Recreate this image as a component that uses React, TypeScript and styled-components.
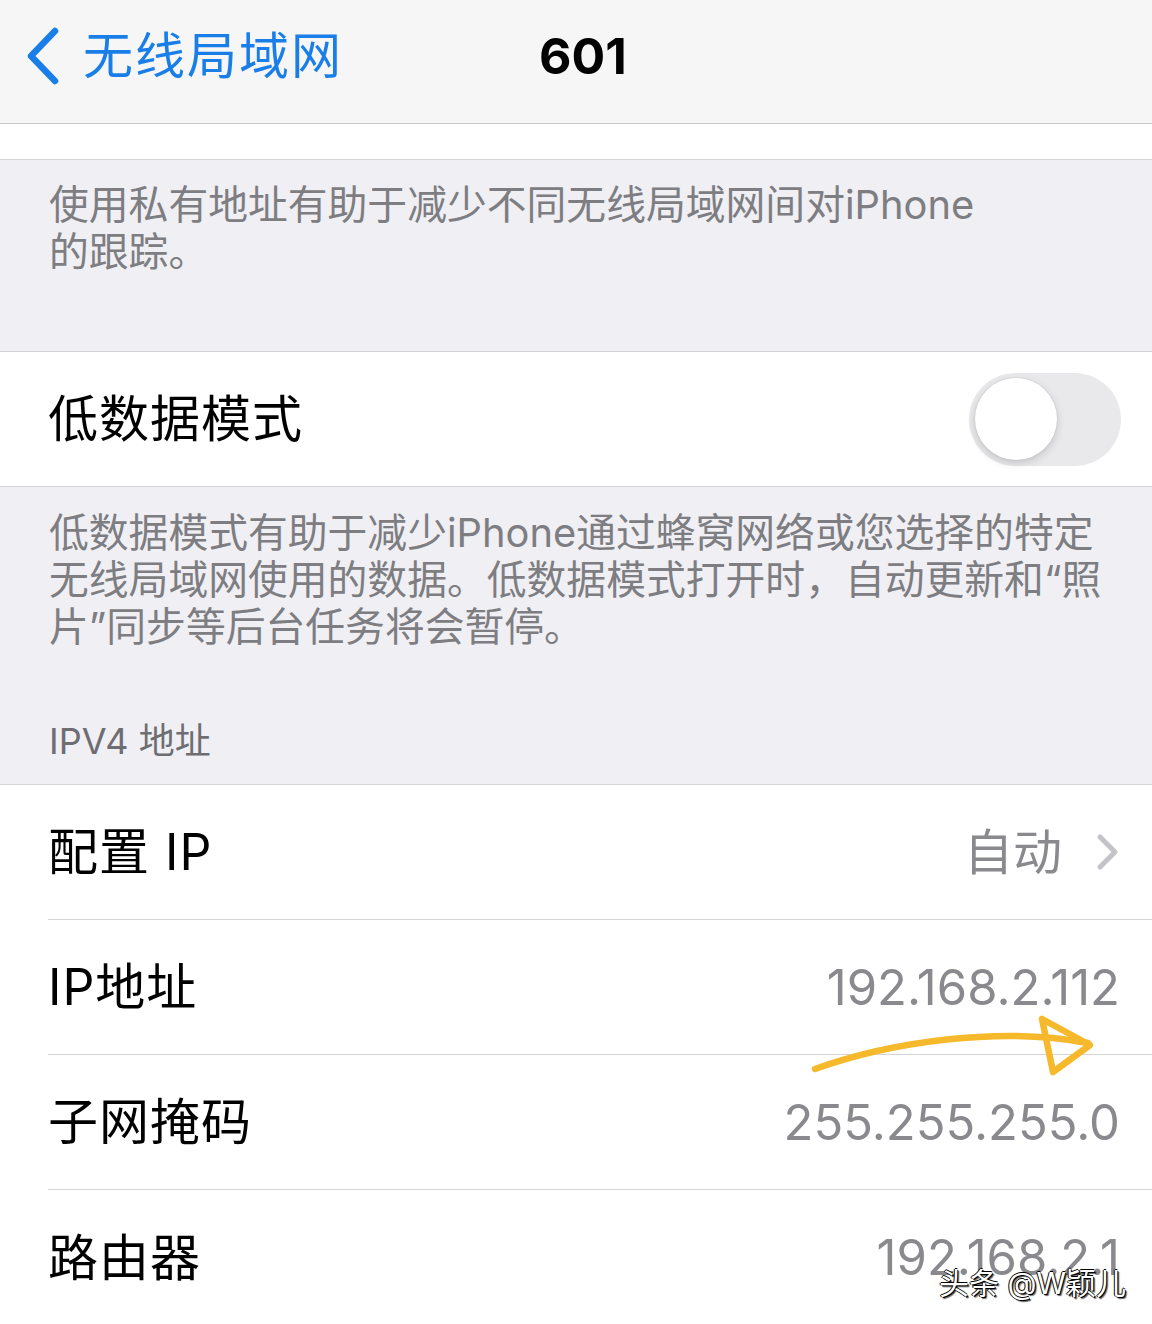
import React from 'react';
import styled, { createGlobalStyle } from 'styled-components';

const GlobalStyle = createGlobalStyle`
  html, body {
    margin: 0;
    padding: 0;
    background: #efeff4;
  }
  body {
    font-family: "Inter", "Noto Sans CJK SC", sans-serif;
    -webkit-font-smoothing: antialiased;
  }
`;

interface InfoRow {
  label: string;
  value: string;
  link?: boolean;
}

const ipRows: InfoRow[] = [
  { label: '配置 IP', value: '自动', link: true },
  { label: 'IP地址', value: '192.168.2.112' },
  { label: '子网掩码', value: '255.255.255.0' },
  { label: '路由器', value: '192.168.2.1' },
];

const BackChevron = () => (
  <svg width="36" height="58" viewBox="0 0 36 58">
    <path
      d="M30 4 L6 29 L30 54"
      fill="none"
      stroke="#1a7ee8"
      strokeWidth="6.5"
      strokeLinecap="round"
      strokeLinejoin="round"
    />
  </svg>
);

const DisclosureChevron = () => (
  <svg width="24" height="38" viewBox="0 0 24 38">
    <path
      d="M4 4 L19 19 L4 34"
      fill="none"
      stroke="#c4c4c8"
      strokeWidth="5"
      strokeLinecap="round"
      strokeLinejoin="round"
    />
  </svg>
);

// hand-drawn marker pointing at the ip address
const MarkerArrow = () => (
  <ArrowLayer width="300" height="70" viewBox="0 0 300 70">
    <g fill="none" stroke="#f6b92c" strokeWidth="6.5" strokeLinecap="round" strokeLinejoin="round">
      <path d="M5 57 C 80 30, 190 14, 278 31" />
      <path d="M232 7 L280 33 L243 60 L232 7" />
    </g>
  </ArrowLayer>
);

export default function App() {
  return (
    <>
      <GlobalStyle />
      <Page>
        <NavBar>
          <BackButton>
            <BackChevron />
            <BackLabel>无线局域网</BackLabel>
          </BackButton>
          <NavTitle>601</NavTitle>
        </NavBar>

        <CellStrip />

        <Footer $height={192} $paddingTop={21}>
          使用私有地址有助于减少不同无线局域网间对iPhone
          <br />
          的跟踪。
        </Footer>

        <Cell>
          <CellLabel>低数据模式</CellLabel>
          <Toggle>
            <Knob />
          </Toggle>
        </Cell>

        <Footer $height={298} $paddingTop={22}>
          低数据模式有助于减少iPhone通过蜂窝网络或您选择的特定
          <br />
          无线局域网使用的数据。低数据模式打开时，自动更新和“照
          <br />
          片”同步等后台任务将会暂停。
          <SectionHeader>IPV4 地址</SectionHeader>
        </Footer>

        <Group>
          {ipRows.map((row, i) => (
            <Row key={row.label} $last={i === ipRows.length - 1}>
              <CellLabel>{row.label}</CellLabel>
              <Value>
                {row.value}
                {row.link && <DisclosureChevron />}
              </Value>
            </Row>
          ))}
        </Group>

        <MarkerArrow />
        <Watermark>头条 @W颖儿</Watermark>
      </Page>
    </>
  );
}

const Page = styled.div`
  position: relative;
  width: 1152px;
  height: 1324px;
  overflow: hidden;
  background: #efeff4;
  display: flex;
  flex-direction: column;
`;

const NavBar = styled.header`
  height: 111px;
  flex-shrink: 0;
  box-sizing: content-box;
  background: #f6f6f7;
  border-bottom: 1px solid #c9c9cc;
  display: flex;
  align-items: center;
  padding: 0 0 12px 25px;
`;

const BackButton = styled.div`
  display: flex;
  align-items: center;
  gap: 22px;
  color: #1a7ee8;
`;

const BackLabel = styled.span`
  font-size: 50px;
  letter-spacing: 2px;
  line-height: 1;
`;

const NavTitle = styled.h1`
  margin: 0 0 0 196px;
  font-size: 50px;
  font-weight: 700;
  color: #000;
  line-height: 1;
`;

const CellStrip = styled.div`
  height: 35px;
  flex-shrink: 0;
  background: #fff;
  border-bottom: 1px solid #d4d4d8;
`;

const Footer = styled.div<{ $height: number; $paddingTop: number }>`
  height: ${(p) => p.$height}px;
  flex-shrink: 0;
  box-sizing: border-box;
  padding: ${(p) => p.$paddingTop}px 30px 0 49px;
  font-size: 39.8px;
  line-height: 47px;
  color: #7d7d82;
  border-bottom: 1px solid #d4d4d8;
`;

const SectionHeader = styled.div`
  margin-top: 68px;
  font-size: 36px;
  line-height: 47px;
  color: #6d6d72;
`;

const Cell = styled.div`
  height: 135px;
  flex-shrink: 0;
  box-sizing: border-box;
  background: #fff;
  border-bottom: 1px solid #d4d4d8;
  display: flex;
  align-items: center;
  justify-content: space-between;
  padding: 0 31px 0 48px;
`;

const CellLabel = styled.span`
  font-size: 50px;
  letter-spacing: 1px;
  line-height: 1;
  color: #000;
`;

const Toggle = styled.div`
  width: 152px;
  height: 93px;
  border-radius: 47px;
  background: #e9e9eb;
  display: flex;
  align-items: center;
  padding-left: 6px;
  box-sizing: border-box;
`;

const Knob = styled.div`
  width: 82px;
  height: 82px;
  border-radius: 50%;
  background: #fff;
  box-shadow: 0 3px 8px rgba(0, 0, 0, 0.16), 0 0 0 1px rgba(0, 0, 0, 0.04);
`;

const Group = styled.div`
  flex: 1;
  background: #fff;
  padding-left: 48px;
`;

const Row = styled.div<{ $last: boolean }>`
  height: 135px;
  box-sizing: border-box;
  display: flex;
  align-items: center;
  justify-content: space-between;
  padding: 0 32px 0 0;
  border-bottom: ${(p) => (p.$last ? 'none' : '1px solid #d4d4d8')};
`;

const Value = styled.span`
  display: flex;
  align-items: center;
  gap: 34px;
  font-size: 49px;
  line-height: 1;
  color: #8a8a8e;
`;

const ArrowLayer = styled.svg`
  position: absolute;
  left: 810px;
  top: 1012px;
`;

const Watermark = styled.div`
  position: absolute;
  right: 26px;
  bottom: 26px;
  font-size: 30px;
  line-height: 1;
  color: #fff;
  text-shadow: 1px 1px 0 #000, -1px 0 0 #000, 0 -1px 0 #000, 2px 2px 1px rgba(0, 0, 0, 0.6);
`;
